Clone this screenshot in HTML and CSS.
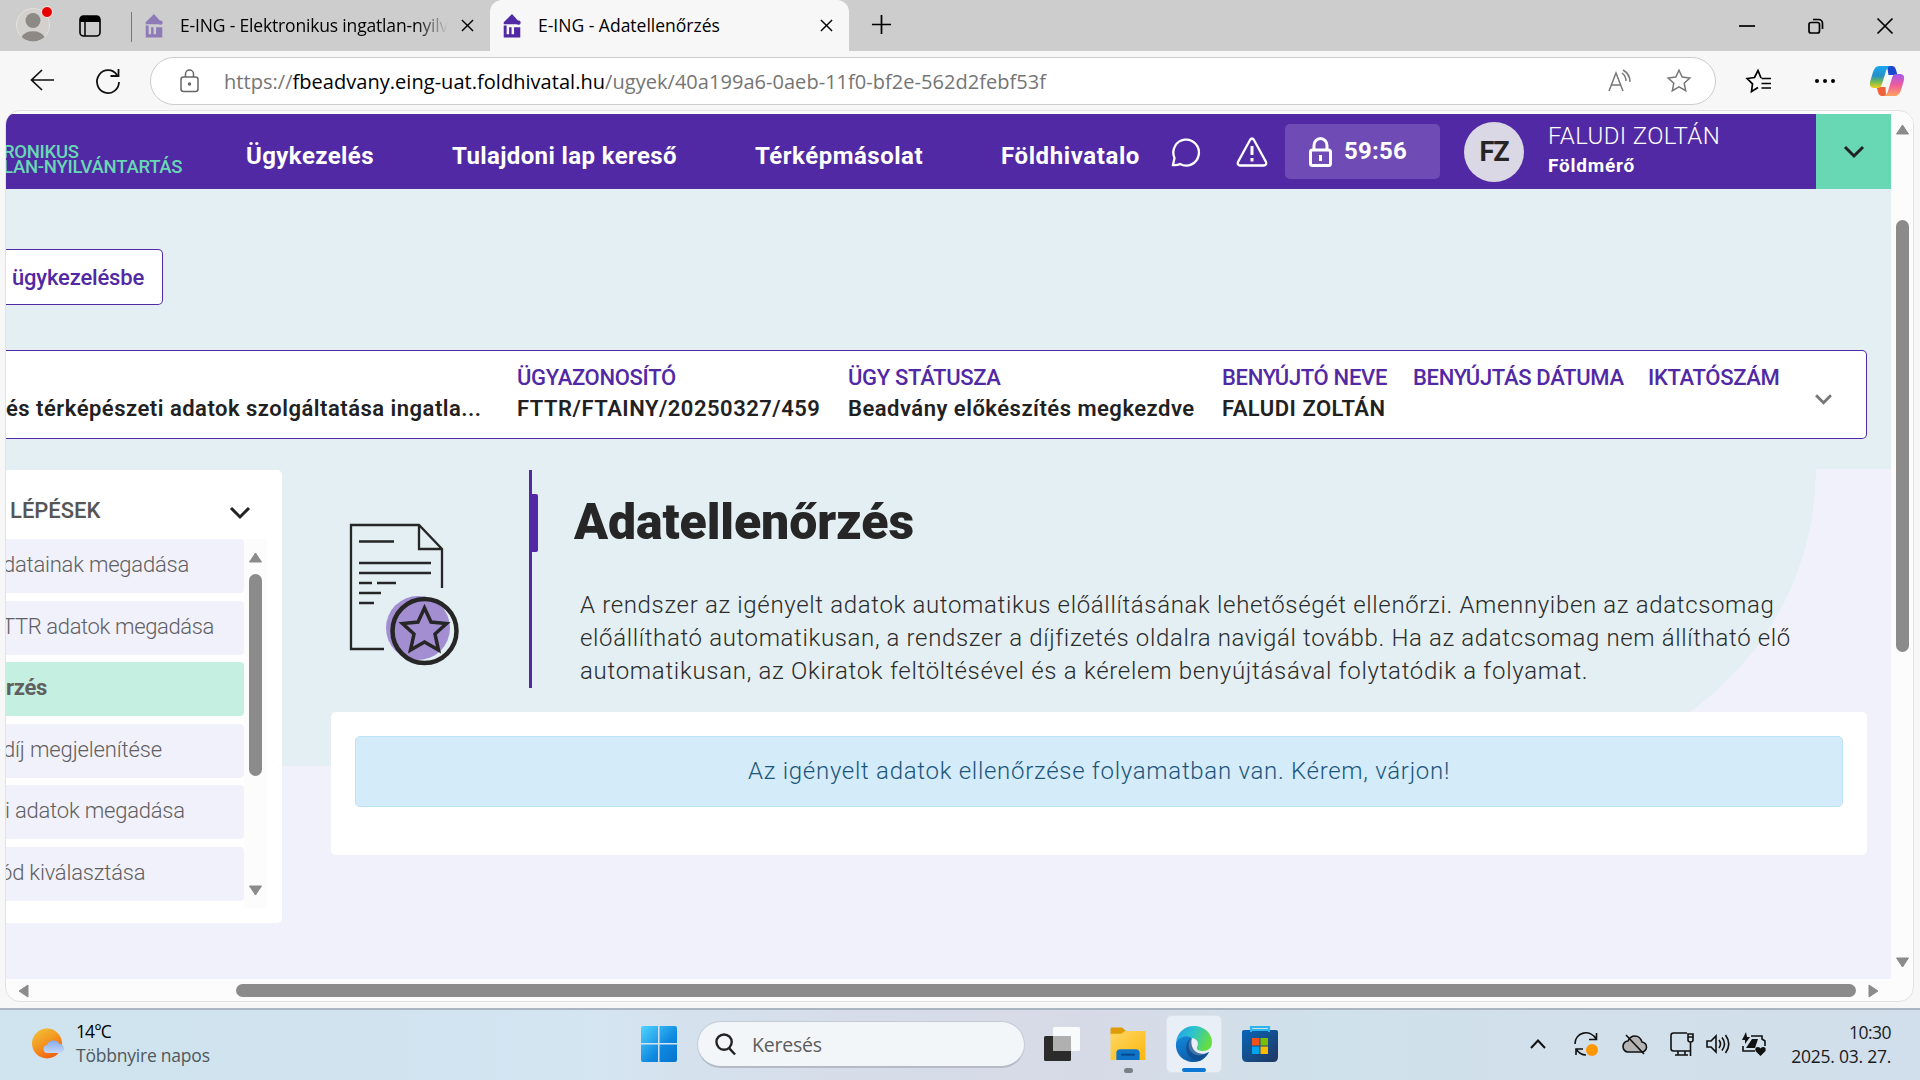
FILE: index.html
```html
<!DOCTYPE html>
<html lang="hu">
<head>
<meta charset="utf-8">
<title>E-ING - Adatellenőrzés</title>
<link rel="stylesheet" href="styles.css">
</head>
<body>
<div class="tabs">
  <svg class="profile" viewBox="0 0 40 40"><circle cx="17" cy="22" r="16.5" fill="#d3d1cd" stroke="#e4e2df"/><circle cx="17" cy="17.500" r="7.500" fill="#8d8985"/><path d="M5.500 34a12.500 9.500 0 0 1 23 0a17 17 0 0 1-23 0z" fill="#8d8985"/><circle cx="31" cy="9" r="5.500" fill="#e80000" stroke="#eee"/></svg>
  <svg class="workspaces" viewBox="0 0 22 22"><rect x="1" y="1" width="20" height="20" rx="3.500" fill="none" stroke="#000" stroke-width="1.600"/><path d="M1 7V4a3 3 0 0 1 3-3h14a3 3 0 0 1 3 3v3z"/><path d="M6 7v14" stroke="#000" stroke-width="1.500"/></svg>
  <span class="divider"></span>
  <div class="tab">
    <svg class="fav faded" viewBox="0 0 20 29"><path d="M10 0L19 10v2.500H0V10z"/><path d="M0 14h3.500v10.500h3V16h3v8.500h3V16H20v12.500H0z"/><circle cx="18" cy="10.500" r="2.500"/></svg>
    <span class="tab-title long">E-ING - Elektronikus ingatlan-nyilv</span>
    <svg class="x" viewBox="0 0 14 14"><path d="M1 1l12 12M13 1L1 13"/></svg>
  </div>
  <div class="tab active">
    <svg class="fav" viewBox="0 0 20 29"><path d="M10 0L19 10v2.500H0V10z"/><path d="M0 14h3.500v10.500h3V16h3v8.500h3V16H20v12.500H0z"/><circle cx="18" cy="10.500" r="2.500"/></svg>
    <span class="tab-title">E-ING - Adatellenőrzés</span>
    <svg class="x" viewBox="0 0 14 14"><path d="M1 1l12 12M13 1L1 13"/></svg>
  </div>
  <svg class="plus" viewBox="0 0 22 22"><path d="M11 1v20M1 11h20"/></svg>
  <div class="win">
    <svg viewBox="0 0 16 16"><path d="M0 8h16"/></svg>
    <svg viewBox="0 0 16 16"><rect x="1" y="4.500" width="10.500" height="10.500" rx="2"/><path d="M5 1.500h5.500a4 4 0 0 1 4 4V11"/></svg>
    <svg viewBox="0 0 16 16"><path d="M.5.5l15 15M15.500.5l-15 15"/></svg>
  </div>
</div>

<div class="toolbar">
  <svg class="back" viewBox="0 0 24 22"><path d="M12 1L1.500 11L12 21M1.500 11H24"/></svg>
  <svg class="reload" viewBox="0 0 24 26"><path d="M21 7A11 11.500 0 1 0 23 14M22.500 1v7h-8"/></svg>
  <div class="address">
    <svg class="lock" viewBox="0 0 20 24"><rect x="1" y="8" width="17" height="14.500" rx="2.500"/><path d="M5.500 8V5a4 4 0 0 1 8 0v3"/><circle cx="9.500" cy="15" r="1"/></svg>
    <span class="url">https://<b>fbeadvany.eing-uat.foldhivatal.hu</b>/ugyek/40a199a6-0aeb-11f0-bf2e-562d2febf53f</span>
    <svg class="read" viewBox="0 0 24 24"><path d="M1 22L8 4l7 18M3.500 16h9M14 4q4 3 4 8M15 1q7 4 7 12"/></svg>
    <svg class="star" viewBox="0 0 24 24"><path d="M12 1.200l3.200 6.900 7.600.9-5.600 5.200 1.500 7.500-6.700-3.800-6.700 3.800 1.500-7.500L1.200 9l7.600-.9z"/></svg>
  </div>
  <svg class="favlist" viewBox="0 0 25 24"><path d="M15 9L12 1.500 8.500 8.500 1.200 9.500l5.300 5.300-1 7.700 6.500-4M15.500 9.500H25M15.500 14.500H25M15.500 19H25"/></svg>
  <svg class="dots" viewBox="0 0 20 4"><circle cx="2" cy="2" r="2"/><circle cx="10" cy="2" r="2"/><circle cx="18" cy="2" r="2"/></svg>
  <svg class="copilot" viewBox="0 0 34 30">
    <defs>
      <linearGradient id="ca" x1="0" y1="0" x2="0" y2="1"><stop offset="0" stop-color="#19a9ee"/><stop offset=".45" stop-color="#2590c8"/><stop offset=".7" stop-color="#6cb85a"/><stop offset="1" stop-color="#f2cf1b"/></linearGradient>
      <linearGradient id="cb" x1="0" y1="0" x2="0" y2="1"><stop offset="0" stop-color="#a558f0"/><stop offset=".5" stop-color="#ee5c9c"/><stop offset="1" stop-color="#ffa35c"/></linearGradient>
    </defs>
    <path d="M17 0h5q3 0 4 4l1.500 5h-9z" fill="#1a49cf"/>
    <path d="M16 30h-4q-3 0-4-4l-1.500-5h9z" fill="#f0613a"/>
    <path d="M9 0h11q-3 1-4 5l-4 13q-1 4-4 4H4q-5 0-4-6L3 6q2-6 6-6z" fill="url(#ca)"/>
    <path d="M25 30H14q3-1 4-5l4-13q1-4 4-4h4q5 0 4 6l-3 10q-2 6-6 6z" fill="url(#cb)"/>
  </svg>
</div>

<div class="frame">
  <div class="page">
    <header class="header">
      <div class="logo"><span class="l1">RONIKUS</span><span class="l2">LAN-NYILVÁNTARTÁS</span></div>
      <nav class="nav">
        <a class="n1">Ügykezelés</a><a class="n2">Tulajdoni lap kereső</a><a class="n3">Térképmásolat</a><a class="n4">Földhivatalo</a>
      </nav>
      <svg class="chat" viewBox="0 0 30 30"><path d="M2 28l1.500-7A12.800 13 0 1 1 9 27q-3 1.500-7 1z"/></svg>
      <svg class="warn" viewBox="0 0 32 30"><path d="M14 3q2-3 4 0l12 22q1 3-2 3.500H4Q1 28 2 25z"/><path d="M16 9v9M16 21v3.500" stroke-width="3"/></svg>
      <div class="timer">
        <svg viewBox="0 0 24 30"><rect x="1.500" y="13" width="20" height="15.500" rx="2"/><path d="M5 13V8.500a6.500 7 0 0 1 13 0V13M11.500 18v6" /></svg>
        <span>59:56</span>
      </div>
      <div class="avatar">FZ</div>
      <div class="user"><span class="name">FALUDI ZOLTÁN</span><span class="role">Földmérő</span></div>
      <div class="expand"><svg viewBox="0 0 20 12"><path d="M1 1l9 9 9-9"/></svg></div>
    </header>

    <div class="backbtn">ügykezelésbe</div>

    <section class="case">
      <div class="col c0"><i>&nbsp;</i><b>és térképészeti adatok szolgáltatása ingatla...</b></div>
      <div class="col c1"><i>ÜGYAZONOSÍTÓ</i><b>FTTR/FTAINY/20250327/459</b></div>
      <div class="col c2"><i>ÜGY STÁTUSZA</i><b>Beadvány előkészítés megkezdve</b></div>
      <div class="col c3"><i>BENYÚJTÓ NEVE</i><b>FALUDI ZOLTÁN</b></div>
      <div class="col c4"><i>BENYÚJTÁS DÁTUMA</i></div>
      <div class="col c5"><i>IKTATÓSZÁM</i></div>
      <svg class="case-arrow" viewBox="0 0 16 10"><path d="M1 1l7 7 7-7"/></svg>
    </section>

    <div class="body">
      <aside class="side">
        <div class="side-head"><span>LÉPÉSEK</span><svg viewBox="0 0 20 12"><path d="M1 1l9 9 9-9"/></svg></div>
        <div class="side-body">
          <ul class="steps">
            <li class="s1">datainak megadása</li>
            <li class="s2">TTR adatok megadása</li>
            <li class="current">rzés</li>
            <li class="s4">díj megjelenítése</li>
            <li class="s5">i adatok megadása</li>
            <li class="s6">ód kiválasztása</li>
          </ul>
          <div class="vbar">
            <svg viewBox="0 0 14 11"><path d="M7 1l6 9H1z"/></svg>
            <span class="thumb"></span>
            <svg class="down" viewBox="0 0 14 11"><path d="M7 10l6-9H1z"/></svg>
          </div>
        </div>
      </aside>
      <main class="main">
        <div class="intro">
          <svg class="doc" viewBox="0 0 112 144">
            <circle cx="69" cy="106" r="32" fill="#a28ed0"/>
            <g fill="none" stroke="#262626" stroke-width="2.300"><path d="M35 127H2V3h68l23 24v39M70 3v24h23"/><path d="M10 19.500h35M10 41h72M10 51h72M10 61h13M28 61h19M10 71h22M10 81h15"/><circle cx="75.500" cy="109" r="32" stroke-width="4.500"/><path d="M75.500 86l6.500 14 15.500 1.500-11.500 10.500 3.500 16-14-8-14 8 3.500-16-11.500-10.500 15.500-1.500z" stroke-width="3.500"/></g>
          </svg>
          <div class="marker"><span></span></div>
          <div class="text">
            <h1>Adatellenőrzés</h1>
            <p><span class="p1">A rendszer az igényelt adatok automatikus előállításának lehetőségét ellenőrzi. Amennyiben az adatcsomag</span><br><span class="p2">előállítható automatikusan, a rendszer a díjfizetés oldalra navigál tovább. Ha az adatcsomag nem állítható elő</span><br><span class="p3">automatikusan, az Okiratok feltöltésével és a kérelem benyújtásával folytatódik a folyamat.</span></p>
          </div>
        </div>
        <div class="card"><div class="alert">Az igényelt adatok ellenőrzése folyamatban van. Kérem, várjon!</div></div>
      </main>
    </div>
  </div>
  <div class="vscroll">
    <svg viewBox="0 0 14 11"><path d="M7 1l6 9H1z"/></svg>
    <span class="thumb"></span>
    <svg class="down" viewBox="0 0 14 11"><path d="M7 10l6-9H1z"/></svg>
  </div>
  <div class="hscroll">
    <svg viewBox="0 0 11 14"><path d="M1 7l9-6v12z"/></svg>
    <span class="thumb"></span>
    <svg viewBox="0 0 11 14"><path d="M10 7L1 1v12z"/></svg>
  </div>
</div>

<footer class="taskbar">
  <svg class="sun" viewBox="0 0 34 32">
    <defs><linearGradient id="su" x1="0" y1="0" x2=".6" y2="1"><stop offset="0" stop-color="#efc63a"/><stop offset=".5" stop-color="#f49a22"/><stop offset="1" stop-color="#f0620d"/></linearGradient><linearGradient id="cl" x1="0" y1="0" x2="0" y2="1"><stop offset="0" stop-color="#86acec"/><stop offset="1" stop-color="#c6d8f8"/></linearGradient></defs>
    <circle cx="15" cy="15.500" r="15" fill="url(#su)"/><path d="M16 25a4 4 0 0 1-1-8 7 7 0 0 1 12.500-1A4.700 4.700 0 0 1 29 25z" fill="url(#cl)"/>
  </svg>
  <div class="weather"><span>14°C</span><em>Többnyire napos</em></div>
  <div class="apps">
    <svg class="start" viewBox="0 0 36 36"><defs><linearGradient id="wi" x1="0" y1="0" x2="1" y2="1"><stop offset="0" stop-color="#4fd4ff"/><stop offset=".6" stop-color="#0f88df"/><stop offset="1" stop-color="#0573cf"/></linearGradient></defs><path fill="url(#wi)" d="M2 0h15v17H0V2q0-2 2-2zM18.500 0H34q2 0 2 2v15H18.500zM0 18.500h17V36H2q-2 0-2-2zM18.500 18.500H36V34q0 2-2 2H18.500z"/></svg>
    <div class="search"><svg viewBox="0 0 22 24"><circle cx="9.500" cy="9.500" r="8"/><path d="M15 16l6 6.500"/></svg><span>Keresés</span></div>
    <svg class="view" viewBox="0 0 36 34"><rect y="9" width="27" height="25" rx="1.500" fill="#2b2b2b"/><rect x="9" width="27" height="24" rx="1.500" fill="#fff" opacity=".85"/><rect x="9" y="9" width="18" height="15" fill="#b0b0b0"/></svg>
    <div class="app"><svg class="folder" viewBox="0 0 36 34"><defs><linearGradient id="fo" x1="0" y1="0" x2="1" y2="1"><stop offset="0" stop-color="#ffd765"/><stop offset="1" stop-color="#fbb70c"/></linearGradient></defs><path d="M0 2q0-1.500 1.500-1.500H12L16 4v4H0z" fill="#df9c06"/><path d="M0 7h11l4-3h21v30H0z" fill="url(#fo)"/><path d="M6 34V27q0-4 4-4h16q4 0 4 4v7z" fill="#0f74c8"/><path d="M11 28.500h14" stroke="#08468a" stroke-width="2"/></svg><span class="dot"></span></div>
    <div class="app open"><svg class="edge" viewBox="0 0 36 36"><defs><linearGradient id="ea" x1="0" y1="0" x2="1" y2=".3"><stop offset="0" stop-color="#239be4"/><stop offset=".5" stop-color="#2bc3d2"/><stop offset="1" stop-color="#64dc46"/></linearGradient><linearGradient id="eb" x1="0" y1="0" x2=".6" y2="1"><stop offset="0" stop-color="#1389dc"/><stop offset="1" stop-color="#0c59a4"/></linearGradient></defs>
      <path d="M0 17C1 6 9 0 18 0c11 0 18 8 18 16 0 6-4 9-9 9-4 0-7-1-6-4 2-3 1-8-5-9C9 10 3 12 0 17z" fill="url(#ea)"/><path d="M0 17c3-6 10-8 16-5-3 2-4 6-3 10 2 6 8 8 13 7 3-.5 5-2 7-3-3 6-8 10-15 10C7 36-1 28 0 17z" fill="url(#eb)"/><path d="M16 12c-6 2-8 12-3 18 3 4 8 5 11 4 4-2 7-5 9-8-5 3-12 2-15-2-3-4-3-9-2-12z" fill="#114a8b" opacity=".75"/></svg><span class="bar"></span></div>
    <svg class="store" viewBox="0 0 36 36"><defs><linearGradient id="st" x1="0" y1="0" x2="1" y2="1"><stop offset="0" stop-color="#0966b9"/><stop offset="1" stop-color="#20365f"/></linearGradient></defs><path d="M9 8V1h18v7" fill="none" stroke="#2cb4ef" stroke-width="2.200"/><path d="M0 6q0-2 2-2h32q2 0 2 2v25q0 5-5 5H5q-5 0-5-5z" fill="url(#st)"/><path d="M9 6V4h18v2" fill="none" stroke="#2cb4ef" stroke-width="2"/><path fill="#f1511b" d="M10 12h7.500v7.500H10z"/><path fill="#80bb03" d="M18.500 12H26v7.500h-7.500z"/><path fill="#02a4ef" d="M10 20.500h7.500V28H10z"/><path fill="#fbb901" d="M18.500 20.500H26V28h-7.500z"/></svg>
  </div>
  <div class="tray">
    <svg class="caret" viewBox="0 0 16 10"><path d="M1 9l7-7.500L15 9"/></svg>
    <svg class="t1" viewBox="0 0 24 24"><path d="M1 12A11 10.500 0 0 1 22 7M22.500 1v6.500H15M2 23v-6h7M2 17q4 6 10 6"/><circle cx="18" cy="18" r="6" class="orange"/></svg>
    <svg class="t2" viewBox="0 0 24 24"><path d="M6 20a5 5.500 0 0 1 0-11Q8 4 13 4t7 6a5 5 0 0 1-1 10z" fill="#b4b4b4"/><path d="M4 3l18 19"/></svg>
    <svg class="t3" viewBox="0 0 24 24"><path d="M17 1H3.500Q1 1 1 3.500v13Q1 19 3.500 19H20M8 19v4M15 19v4M5 23h13M18 2h5v6q0 2-2.500 2T18 8zM18 5h5M20.500 10v14"/></svg>
    <svg class="t4" viewBox="0 0 24 24"><path d="M1 9h4l5-5v16l-5-5H1zM13 8q3 4 0 8M16 5.500q5 6.500 0 13M19.500 3q6.500 9 0 18"/></svg>
    <svg class="t5" viewBox="0 0 24 24"><path d="M9 4h11v3l3 2v5M1 14v5h12"/><path d="M4 0L0 8h3v4l5-7H5zM10 7h6l-3 9H4zM18.500 24l-5-5q-1-4 2.500-4 2 0 2.500 1.500Q19 15 21 15q3.500 0 2.500 4z" class="solid"/></svg>
    <div class="clock"><span class="time">10:30</span><span class="date">2025. 03. 27.</span></div>
  </div>
</footer>
</body>
</html>
```
FILE: styles.css
```css
* { box-sizing: border-box; }
body { margin: 0; width: 1920px; height: 1080px; overflow: hidden; display: flex; flex-direction: column; background: #f7f7f7; font-family: "Open Sans", "Noto Sans", sans-serif; color: #000; white-space: nowrap; }
svg { display: block; flex: none; overflow: visible; }
i, em { font-style: normal; }

/* Browser tabs */
.tabs { display: flex; align-items: center; height: 51px; flex: none; background: #cdcdcd; font-size: 17.500px; }
.profile { width: 40px; height: 40px; margin: -5px 0 0 16px; }
.workspaces { width: 22px; height: 22px; margin-left: 23px; }
.divider { width: 1px; height: 30px; margin: 2px 0 0 30px; background: #777; }
.tab { display: flex; align-items: center; width: 358px; height: 51px; padding: 0 16px 0 12px; }
.tab.active { background: #f7f7f7; border-radius: 12px 12px 0 0; width: 359px; }
.fav { width: 20px; height: 24px; fill: #5229a5; }
.faded { opacity: .5; }
.tab-title { margin: -1px 0 0 16px; width: 268px; overflow: hidden; line-height: 24px; }
.long { letter-spacing: -.17px; -webkit-mask-image: linear-gradient(90deg, #000 88%, transparent); mask-image: linear-gradient(90deg, #000 88%, transparent); }
.x { width: 13px; height: 13px; margin-left: auto; fill: none; stroke: #000; stroke-width: 1.500; }
.plus { width: 21px; height: 21px; margin-left: 22px; margin-top: -2px; fill: none; stroke: #000; stroke-width: 1.800; }
.win { display: flex; gap: 53px; margin-left: auto; margin-right: 27px; }
.win svg { width: 16px; height: 16px; fill: none; stroke: #000; stroke-width: 1.700; }

/* Browser toolbar */
.toolbar { display: flex; align-items: center; height: 60px; flex: none; }
.back { width: 24px; height: 22px; margin: -2px 0 0 30px; fill: none; stroke: #111; stroke-width: 1.700; }
.reload { width: 24px; height: 26px; margin-left: 42px; fill: none; stroke: #111; stroke-width: 1.800; }
.address { display: flex; align-items: center; width: 1566px; height: 48px; margin-left: 30px; background: #fff; border: 1px solid #ccc; border-radius: 24px; }
.lock { width: 20px; height: 24px; margin-left: 29px; fill: none; stroke: #666; stroke-width: 1.500; }
.url { width: 822px; margin-left: 24px; font-size: 20px; letter-spacing: .037px; color: #757575; }
.url b { font-weight: 400; color: #000; }
.read { width: 24px; height: 26px; margin-left: auto; fill: none; stroke: #777; stroke-width: 1.500; }
.star { width: 24px; height: 24px; margin: 0 24px 0 35px; fill: none; stroke: #777; stroke-width: 1.500; }
.favlist { width: 25px; height: 24px; margin-left: 30px; fill: none; stroke: #000; stroke-width: 1.700; }
.dots { width: 20px; height: 4px; margin-left: 44px; }
.copilot { width: 34px; height: 30px; margin-left: 35px; }

/* Page frame */
.frame { display: grid; grid-template: 865px 23px / 1885px 22px; width: 1909px; height: 892px; flex: none; margin-left: 5px; padding-top: 3px; overflow: hidden; background: #fcfcfc; border: 1px solid #e2e2e2; border-radius: 15px; margin-top: -1px; margin-bottom: 6px; }
.page { overflow: hidden; font-family: Roboto, sans-serif; border-radius: 7px 0 0 0; background: radial-gradient(circle at 0 0, #e3eff3 296.500px, transparent 297px) 1513px 355px / 297px 297px no-repeat, linear-gradient(#e3eff3, #e3eff3) 0 0 / 1885px 355px no-repeat, linear-gradient(#e3eff3, #e3eff3) 0 0 / 1513px 652px no-repeat, #f1f1fb; }
.vscroll, .vbar { display: flex; flex-direction: column; align-items: center; background: #fcfcfc; }
.vscroll { height: 865px; padding-left: 1px; }
.thumb { background: #8b8b8b; border-radius: 7px; }
.vscroll svg, .vbar svg { width: 15px; height: 11px; fill: #8b8b8b; stroke: #8b8b8b; stroke-linejoin: round; stroke-width: 1; }
.vscroll svg { margin-top: 10px; }
.vscroll .thumb { width: 13px; height: 432px; margin-top: 85px; }
.vscroll .down { margin-top: 305px; }
.hscroll { display: flex; padding: 5px 0 0 12px; }
.hscroll svg { width: 11px; height: 14px; fill: #8b8b8b; stroke: #8b8b8b; stroke-linejoin: round; }
.hscroll .thumb { width: 1620px; height: 13px; margin: 0 12px 0 207px; flex: none; }

/* Application header */
.header { display: flex; align-items: center; height: 75px; background: #5229a5; color: #fff; }
.logo { display: flex; flex-direction: column; width: 243px; margin-left: -3px; padding-top: 17px; color: #68d8b4; font-size: 18.500px; line-height: 15px; font-weight: 500; }
.l1 { letter-spacing: -.3px; }
.l2 { letter-spacing: -.25px; }
.nav { display: flex; gap: 78px; padding-top: 8px; font-size: 24px; line-height: 30px; font-weight: 700; }
.n1 { width: 128px; letter-spacing: .42px; }
.n2 { width: 225px; letter-spacing: .38px; }
.n3 { width: 168px; letter-spacing: .51px; }
.n4 { width: 139px; letter-spacing: .6px; }
.chat { width: 30px; height: 30px; margin-left: 31px; fill: none; stroke: #fff; stroke-width: 2.300; }
.warn { width: 32px; height: 30px; margin-left: 35px; fill: none; stroke: #fff; stroke-width: 2.300; }
.timer { display: flex; align-items: center; width: 155px; height: 55px; margin-left: 17px; padding-left: 24px; background: #6e4bb5; border-radius: 5px; font-size: 24px; line-height: 26px; letter-spacing: .23px; font-weight: 700; }
.timer svg { width: 24px; height: 30px; margin-right: 11px; fill: none; stroke: #fff; stroke-width: 3; }
.timer span { margin-top: -2px; }
.avatar { display: flex; align-items: center; justify-content: center; width: 60px; height: 60px; margin-left: 24px; border-radius: 50%; background: #dad8e4; color: #262626; font-size: 27px; letter-spacing: -1px; font-weight: 700; }
.user { display: flex; flex-direction: column; width: 268px; margin-left: 24px; margin-top: -1px; }
.name { font-size: 24px; font-weight: 300; line-height: 29px; letter-spacing: .35px; }
.role { font-size: 19px; font-weight: 700; line-height: 30px; letter-spacing: .77px; }
.expand { display: flex; align-items: center; justify-content: center; width: 75px; height: 75px; margin-left: auto; background: #68d8b4; }
.expand svg, .side-head svg { width: 20px; height: 12px; fill: none; stroke: #222; stroke-width: 3; }

/* Case summary */
.backbtn { width: 157px; height: 56px; margin-top: 60px; padding: 14px 0 0 6px; background: #fff; border: 1px solid #5229a5; border-left: 0; border-radius: 0 5px 5px 0; color: #5229a5; font-size: 22px; line-height: 28px; letter-spacing: -.17px; font-weight: 500; }
.case { display: flex; width: 1861px; height: 89px; margin-top: 45px; padding-top: 11px; background: #fff; border: 1px solid #5229a5; border-left: 0; border-radius: 0 5px 5px 0; font-size: 22px; line-height: 31px; }
.col { display: flex; flex-direction: column; flex: none; }
.col i { color: #5229a5; font-weight: 500; letter-spacing: -.31px; }
.col b { color: #212121; font-weight: 600; letter-spacing: .5px; }
.c0 { width: 511px; } .c1 { width: 331px; } .c2 { width: 374px; } .c3 { width: 191px; } .c4 { width: 235px; } .c5 { width: 167px; }
.case-arrow { width: 17px; height: 11px; margin-top: 32px; fill: none; stroke: #777; stroke-width: 2.600; }

/* Steps */
.body { display: flex; gap: 49px; margin-top: 31px; }
.side { width: 276px; height: 453px; background: #fff; border-radius: 0 5px 5px 0; }
.side-head { display: flex; align-items: center; justify-content: space-between; height: 69px; padding: 12px 32px 0 4px; color: #555; font-size: 22px; font-weight: 500; }
.side-head svg { margin-top: 4px; }
.side-body { display: flex; }
.steps { list-style: none; margin: 0; padding: 0; width: 238px; display: flex; flex-direction: column; gap: 7.500px; }
.steps li { height: 54px; overflow: hidden; border-radius: 0 4px 4px 0; background: #f1f1fb; color: #606060; font-size: 22px; font-weight: 300; line-height: 52px; }
.steps .current { background: #c5efe0; font-weight: 700; letter-spacing: -.3px; }
.s1 { text-indent: -3px; letter-spacing: -.22px; }
.s2 { text-indent: -4px; letter-spacing: -.36px; }
.s4 { text-indent: -3px; letter-spacing: -.14px; }
.s5 { text-indent: -1px; letter-spacing: -.2px; }
.s6 { text-indent: -6px; letter-spacing: -.2px; }
.vbar { width: 23px; height: 369px; }
.vbar svg { margin-top: 13px; }
.vbar .thumb { width: 13px; height: 202px; margin-top: 11px; }
.vbar .down { margin-top: 109px; }

/* Main panel */
.main { width: 1536px; }
.intro { display: flex; height: 242px; }
.doc { width: 112px; height: 144px; margin: 52px 0 0 18px; }
.marker { width: 9px; height: 218px; margin-left: 68px; border-left: 3px solid #5229a5; }
.marker span { display: block; width: 6px; height: 58px; margin-top: 24px; background: #5229a5; border-radius: 0 2px 2px 0; }
.text { color: #2b2b2b; margin-left: 36px; }
h1 { margin: 21px 0 0; color: #262626; font-size: 50px; line-height: 62px; font-weight: 900; letter-spacing: -.1px; }
p { margin: 36px 0 0 6px; font-size: 24px; font-weight: 300; line-height: 33px; }
.p1 { letter-spacing: .66px; }
.p2 { letter-spacing: .64px; }
.p3 { letter-spacing: .71px; }
.card { height: 143px; padding: 24px; background: #fff; border-radius: 5px; }
.alert { height: 71px; border: 1px solid #bce3f6; border-radius: 5px; background: #d4ebfa; color: #1c567a; text-align: center; font-size: 24px; font-weight: 300; line-height: 68px; letter-spacing: .71px; }

/* Windows taskbar */
.taskbar { display: flex; align-items: center; height: 72px; flex: none; border-top: 2px solid #a9b5c1; background: linear-gradient(90deg, #cfe4ee 0, #d0e3ef 18%, #d4e5f2 30%, #d6dde8 44%, #d6dae6 57%, #cfe1ea 69%, #d1e0ea 80%, #d0dfeb 100%); }
.sun { width: 34px; height: 32px; margin: -3px 0 0 32px; }
.weather { display: flex; flex-direction: column; width: 565px; margin: -4px 0 0 10px; font-size: 17.500px; line-height: 24px; }
.weather span { letter-spacing: -.9px; }
.weather em { color: #51585c; letter-spacing: -.22px; }
.apps { display: flex; align-items: center; height: 70px; }
.start { width: 36px; height: 36px; margin-top: -2px; }
.search { display: flex; align-items: center; width: 328px; height: 47px; margin: -1px 0 0 20px; padding-left: 17px; border: 1px solid #c3cbd6; border-bottom: 2px solid #b4bbc6; border-radius: 24px; background: #f3f6f9; color: #5c5c5c; font-size: 19.500px; letter-spacing: -.2px; }
.search svg { width: 21px; height: 23px; margin-right: 16px; fill: none; stroke: #222; stroke-width: 2.500; }
.view { width: 36px; height: 34px; margin: -2px 0 0 19px; }
.app { display: flex; flex-direction: column; align-items: center; width: 56px; height: 58px; margin: -2px 0 0 20px; padding-top: 12px; border-radius: 5px; }
.open { margin-left: 10px; background: #e9eff6; border: 1px solid #dbe2ea; padding-top: 10px; }
.folder { width: 36px; height: 33px; }
.edge { width: 36px; height: 36px; }
.dot { width: 9px; height: 5px; margin-top: 8px; border-radius: 3px; background: #7b7f86; }
.bar { width: 24px; height: 5px; margin-top: 6px; border-radius: 3px; background: #0a78d4; }
.store { width: 36px; height: 36px; margin: -2px 0 0 20px; }
.tray { display: flex; align-items: center; margin: -3px 0 0 auto; padding-right: 29px; }
.tray svg { width: 24px; height: 24px; fill: none; stroke: #111; stroke-width: 1.600; }
.tray .caret { width: 16px; height: 10px; stroke-width: 2; }
.t1 { margin-left: 28px; } .t2 { margin-left: 24px; } .t3 { margin-left: 24px; } .t4, .t5 { margin-left: 12px; }
.tray .orange { fill: #ff9800; stroke: none; }
.tray .solid { fill: #111; stroke: none; }
.clock { display: flex; flex-direction: column; align-items: flex-end; width: 125px; font-size: 17.500px; line-height: 24px; color: #1b1b1b; }
.time { letter-spacing: -.5px; }
.date { letter-spacing: -.25px; }
```
